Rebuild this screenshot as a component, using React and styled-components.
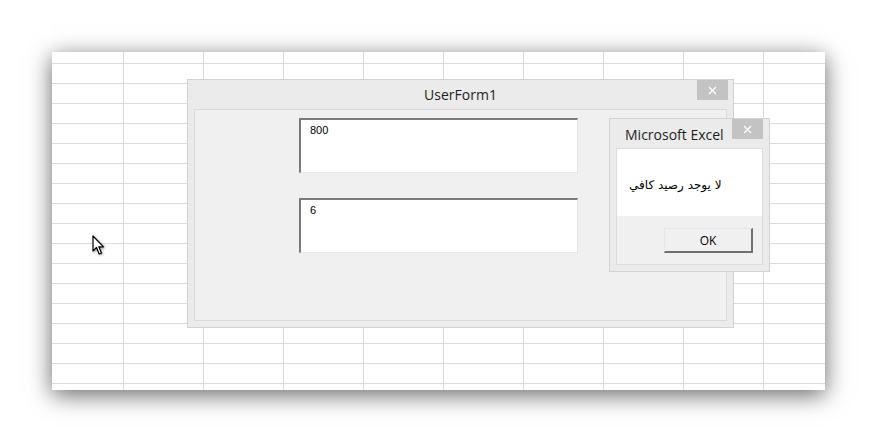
import React from 'react';
import styled, { createGlobalStyle } from 'styled-components';

const GlobalStyle = createGlobalStyle`
  html, body {
    margin: 0;
    padding: 0;
    background: #ffffff;
  }
  body {
    font-family: "Liberation Sans", Arial, sans-serif;
  }
`;

const Page = styled.div`
  width: 877px;
  height: 442px;
  padding: 52px;
  box-sizing: border-box;
  overflow: hidden;
`;

const Sheet = styled.div`
  position: relative;
  width: 773px;
  height: 338px;
  background-color: #ffffff;
  background-image:
    linear-gradient(to right, #dadada 1px, transparent 1px),
    linear-gradient(to bottom, #dadada 1px, transparent 1px);
  background-size: 80px 20px;
  background-position: 71px 11px;
  box-shadow: 0 5px 22px rgba(0, 0, 0, 0.6);
`;

const Window = styled.div`
  position: absolute;
  left: ${(p) => p.$x}px;
  top: ${(p) => p.$y}px;
  width: ${(p) => p.$w}px;
  height: ${(p) => p.$h}px;
  box-sizing: border-box;
  background: #ebebeb;
  border: 1px solid #d2d2d2;
  display: flex;
  flex-direction: column;
  padding: 0 6px 6px 6px;
`;

const TitleBar = styled.div`
  height: 29px;
  flex: none;
  display: flex;
  align-items: center;
  justify-content: ${(p) => (p.$center ? 'center' : 'flex-start')};
  padding-left: ${(p) => (p.$center ? 0 : 9)}px;
  padding-top: ${(p) => p.$pt || 0}px;
  box-sizing: border-box;
  position: relative;
  font-family: "Open Sans", "Noto Sans", sans-serif;
  font-size: 14px;
  color: #1e1e1e;
`;

const CloseButton = styled.div`
  position: absolute;
  right: ${(p) => p.$right}px;
  top: 0;
  width: 31px;
  height: 20px;
  background: #c3c3c3;
  color: #ffffff;
  display: flex;
  align-items: center;
  justify-content: center;
  svg {
    display: block;
  }
`;

const Client = styled.div`
  flex: 1;
  background: #f0f0f0;
  border: 1px solid #d9d9d9;
  position: relative;
  display: flex;
  flex-direction: column;
  padding: 8px 0 0 104px;
  gap: 25px;
`;

const TextBox = styled.div`
  width: 279px;
  height: 55px;
  box-sizing: border-box;
  background: #ffffff;
  border-top: 2px solid #7a7a7a;
  border-left: 2px solid #7a7a7a;
  border-right: 1px solid #e3e3e3;
  border-bottom: 1px solid #e3e3e3;
  padding: 4px 0 0 9px;
  font-size: 11px;
  color: #000;
  line-height: 13px;
`;

const MsgBody = styled.div`
  flex: 1;
  border: 1px solid #dcdcdc;
  background: #f0f0f0;
  display: flex;
  flex-direction: column;
`;

const MsgText = styled.div`
  height: 67px;
  background: #ffffff;
  display: flex;
  align-items: center;
  padding-left: 12px;
  padding-top: 4px;
  box-sizing: border-box;
  font-family: "DejaVu Sans", "Noto Sans", sans-serif;
  font-size: 12px;
  color: #000;
`;

const ButtonRow = styled.div`
  flex: 1;
  display: flex;
  justify-content: flex-end;
  padding: 12px 9px 0 0;
`;

const OkButton = styled.div`
  width: 89px;
  height: 25px;
  box-sizing: border-box;
  background: #f0f0f0;
  border-top: 1px solid #e6e6e6;
  border-left: 1px solid #e6e6e6;
  border-right: 2px solid #6f6f6f;
  border-bottom: 2px solid #6f6f6f;
  display: flex;
  align-items: center;
  justify-content: center;
  font-family: "Open Sans", "Noto Sans", sans-serif;
  font-size: 12px;
  color: #000;
`;

const Cursor = styled.svg`
  position: absolute;
  left: 40px;
  top: 183px;
  filter: drop-shadow(1px 1px 1px rgba(0, 0, 0, 0.4));
`;

const CloseIcon = () => (
  <svg width="9" height="9" viewBox="0 0 9 9">
    <path d="M1 1 L8 8 M8 1 L1 8" stroke="#ffffff" strokeWidth="1.3" />
  </svg>
);

export default function App() {
  return (
    <>
      <GlobalStyle />
      <Page>
        <Sheet>
          <Cursor width="14" height="21" viewBox="0 0 14 21">
            <path
              d="M1 1 L1 16 L4.5 12.5 L7.2 19 L9.5 18 L6.8 11.8 L11.5 11.8 Z"
              fill="#ffffff"
              stroke="#000000"
              strokeWidth="1.2"
              strokeLinejoin="round"
            />
          </Cursor>

          <Window $x={135} $y={27} $w={547} $h={249}>
            <TitleBar $center>
              UserForm1
              <CloseButton $right={-1}>
                <CloseIcon />
              </CloseButton>
            </TitleBar>
            <Client>
              <TextBox>800</TextBox>
              <TextBox>6</TextBox>
            </Client>
          </Window>

          <Window $x={557} $y={66} $w={161} $h={154}>
            <TitleBar $pt={1}>
              Microsoft Excel
              <CloseButton $right={0}>
                <CloseIcon />
              </CloseButton>
            </TitleBar>
            <MsgBody>
              <MsgText>
                <span dir="rtl">لا يوجد رصيد كافي</span>
              </MsgText>
              <ButtonRow>
                <OkButton>OK</OkButton>
              </ButtonRow>
            </MsgBody>
          </Window>
        </Sheet>
      </Page>
    </>
  );
}
